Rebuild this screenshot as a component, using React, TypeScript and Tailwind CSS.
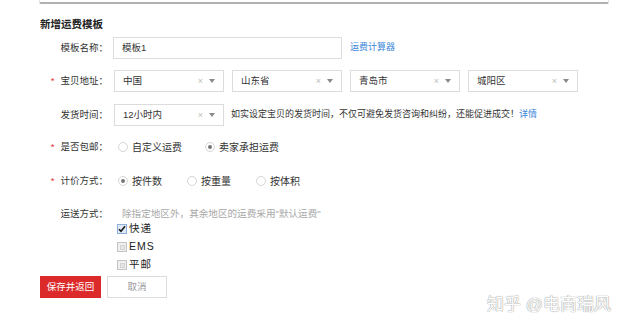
import React from "react";

const font = "font-['Liberation_Sans','Noto_Sans_CJK_SC',sans-serif]";

function Label({ text, required }: { text: string; required?: boolean }) {
  return (
    <div className="w-[68px] shrink-0 text-right text-[9.5px] text-[#333] whitespace-nowrap">
      {required && <span className="text-[#e4393c] mr-[6px]">*</span>}
      {text}
    </div>
  );
}

function Select({ value }: { value: string }) {
  return (
    <div className="w-[110px] h-[22px] shrink-0 border border-[#dcdcdc] bg-white flex items-center pl-[8px] pr-[8px] text-[9.5px] text-[#333]">
      <span>{value}</span>
      <span className="ml-auto text-[9px] leading-none text-[#bdbdbd]">×</span>
      <span className="ml-[6px] w-0 h-0 border-x-[3.5px] border-x-transparent border-t-[4px] border-t-[#8a8a8a]" />
    </div>
  );
}

function Radio({ label, checked }: { label: string; checked?: boolean }) {
  return (
    <div className="flex items-center">
      <span className="w-[10px] h-[10px] rounded-full border border-[#d6d6d6] bg-white flex items-center justify-center">
        {checked && <span className="w-[4px] h-[4px] rounded-full bg-[#777]" />}
      </span>
      <span className="ml-[4px] text-[10px] text-[#333]">{label}</span>
    </div>
  );
}

function Check({ label, checked }: { label: string; checked?: boolean }) {
  return (
    <div className="h-[18px] flex items-center ml-[4px]">
      {checked ? (
        <span className="w-[10px] h-[10px] border border-[#8fb0d8] bg-[#dfe9f6] flex items-center justify-center">
          <svg width="8" height="8" viewBox="0 0 8 8">
            <path d="M1 4.2 L3 6.3 L7 1.3" stroke="#1a1a1a" strokeWidth="1.6" fill="none" />
          </svg>
        </span>
      ) : (
        <span className="w-[10px] h-[10px] border border-[#c4c4c4] bg-[#f0f0f0] flex items-center justify-center">
          <span className="w-[5px] h-[5px] border border-[#d4d4d4] bg-[#e6e6e6]" />
        </span>
      )}
      <span className="ml-[2px] text-[10.5px] tracking-[1px] text-[#222]">{label}</span>
    </div>
  );
}

export default function App() {
  return (
    <div className={`w-[640px] h-[332px] bg-white relative overflow-hidden ${font}`}>
      <div className="ml-[39px] w-[570px] h-[4px] border-x border-[#e2e2e2] border-b-2 border-b-[#b0b0b0] rounded-b-[2px]" />

      <div className="pl-[40px]">
        <div className="mt-[12px] h-[16px] leading-[16px] text-[10.5px] font-bold text-[#222]">新增运费模板</div>

        <div className="mt-[5px] h-[22px] flex items-center">
          <Label text="模板名称：" />
          <div className="ml-[5px] w-[229px] h-[22px] border border-[#dcdcdc] flex items-center pl-[8px] text-[9.5px] text-[#333]">
            模板1
          </div>
          <span className="ml-[8px] text-[9px] text-[#3b86d8]">运费计算器</span>
        </div>

        <div className="mt-[11px] h-[22px] flex items-center">
          <Label text="宝贝地址：" required />
          <div className="ml-[6px] flex gap-[8px]">
            <Select value="中国" />
            <Select value="山东省" />
            <Select value="青岛市" />
            <Select value="城阳区" />
          </div>
        </div>

        <div className="mt-[12px] h-[22px] flex items-center">
          <Label text="发货时间：" />
          <div className="ml-[6px]">
            <Select value="12小时内" />
          </div>
          <span className="ml-[7px] text-[9px] text-[#333] whitespace-nowrap">
            如实设定宝贝的发货时间，不仅可避免发货咨询和纠纷，还能促进成交！
            <span className="text-[#3b86d8]">详情</span>
          </span>
        </div>

        <div className="mt-[10px] h-[22px] flex items-center">
          <Label text="是否包邮：" required />
          <div className="ml-[10px] flex items-center gap-[23px]">
            <Radio label="自定义运费" />
            <Radio label="卖家承担运费" checked />
          </div>
        </div>

        <div className="mt-[12px] h-[22px] flex items-center">
          <Label text="计价方式：" required />
          <div className="ml-[10px] flex items-center gap-[25px]">
            <Radio label="按件数" checked />
            <Radio label="按重量" />
            <Radio label="按体积" />
          </div>
        </div>

        <div className="mt-[13px] h-[18px] flex items-center">
          <Label text="运送方式：" />
          <span className="ml-[14px] text-[9.6px] text-[#a8a8a8] whitespace-nowrap">
            除指定地区外，其余地区的运费采用"默认运费"
          </span>
        </div>

        <div className="mt-[-3px] pl-[73px]">
          <Check label="快递" checked />
          <Check label="EMS" />
          <Check label="平邮" />
        </div>

        <div className="mt-[2px] flex gap-[6px]">
          <button className="w-[61px] h-[22px] bg-[#dc2a2a] text-white text-[9.5px]">保存并返回</button>
          <button className="w-[60px] h-[22px] bg-white border border-[#dcdcdc] text-[#999] text-[9.5px]">取消</button>
        </div>
      </div>

      <div className="absolute left-[487px] top-[295px] text-[17px] leading-[20px] text-white whitespace-nowrap [text-shadow:0_0_1px_#9a9a9a,0_0_1px_#9a9a9a]">
        知乎 @电商瑞风
      </div>
    </div>
  );
}
